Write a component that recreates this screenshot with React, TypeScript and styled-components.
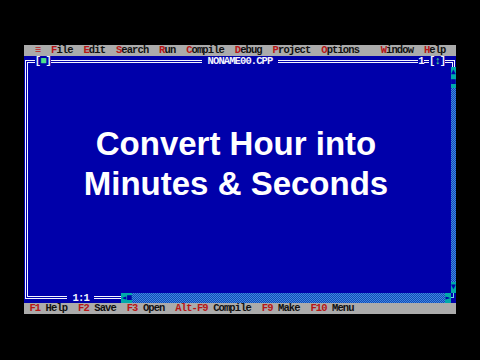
import React from "react";
import styled, { createGlobalStyle } from "styled-components";

const CW = 5.4;
const RH = 10.76;
const px = (n: number) => `${n.toFixed(2)}px`;

const Global = createGlobalStyle`
  html, body { margin: 0; padding: 0; background: #000; }
  body { width: 480px; height: 360px; overflow: hidden; }
`;

const Page = styled.div`
  width: 480px;
  height: 360px;
  box-sizing: border-box;
  padding: 45px 0 0 24px;
  background: #000;
`;

const Screen = styled.div`
  width: ${px(CW * 80)};
  height: ${px(RH * 25)};
  display: grid;
  grid-template-rows: ${px(RH)} 1fr ${px(RH)};
  font-family: "Liberation Mono", "DejaVu Sans Mono", monospace;
  font-size: 10.5px;
  font-weight: bold;
  letter-spacing: -0.9px;
  line-height: ${px(RH)};
  white-space: pre;
`;

const Bar = styled.div`
  display: block;
  background: #ababab;
  color: #101010;
  overflow: hidden;
`;

const Hot = styled.span`
  color: #b81616;
`;

const Window = styled.div`
  display: grid;
  grid-template-columns: ${px(CW)} 1fr ${px(CW)};
  grid-template-rows: ${px(RH)} 1fr ${px(RH)};
  background: #0000aa;
  color: #fff;
`;

const FRAME = "#f4f4ff";

const Corner = styled.div<{ $pos: "tl" | "tr" | "bl" }>`
  ${({ $pos }) =>
    $pos === "tl"
      ? `margin: 3.88px 0 0 1.2px; border-top: 3px double ${FRAME}; border-left: 3px double ${FRAME};`
      : $pos === "tr"
      ? `margin: 3.88px 1.2px 0 0; border-top: 3px double ${FRAME}; border-right: 3px double ${FRAME};`
      : `margin: 0 0 3.88px 1.2px; border-bottom: 3px double ${FRAME}; border-left: 3px double ${FRAME};`}
`;

const ResizeCorner = styled.div`
  margin: 0 2.2px 4.9px 0;
  border-right: 1px solid #5fe0e0;
  border-bottom: 1px solid #5fe0e0;
`;

const FrameRow = styled.div`
  display: flex;
  align-items: center;
  overflow: hidden;
`;

const HLine = styled.div<{ $cells: number }>`
  flex: none;
  width: ${({ $cells }) => px($cells * CW)};
  height: 3px;
  box-sizing: border-box;
  border-top: 1px solid ${FRAME};
  border-bottom: 1px solid ${FRAME};
`;

const Label = styled.span<{ $color?: string }>`
  color: ${({ $color }) => $color ?? FRAME};
`;

const Rail = styled.div`
  margin-left: 1.2px;
  border-left: 3px double ${FRAME};
`;

const Editor = styled.div`
  display: flex;
  flex-direction: column;
  align-items: center;
  padding: 57px 8px 0 0;
  overflow: hidden;
`;

const Headline = styled.div`
  font-family: "Liberation Sans", Arial, sans-serif;
  font-weight: bold;
  font-size: 33px;
  line-height: 40px;
  letter-spacing: 0;
  color: #ffffff;
  white-space: pre;
  text-align: center;
`;

const VScroll = styled.div`
  display: flex;
  flex-direction: column;
`;

const HScroll = styled.div`
  flex: 1;
  display: flex;
  align-self: stretch;
`;

const Cell = styled.div`
  flex: none;
  width: ${px(CW)};
  height: ${px(RH)};
  background: #00aaaa;
  color: #0000aa;
  font-family: "DejaVu Sans Mono", monospace;
  font-size: 8px;
  letter-spacing: 0;
  text-align: center;
  line-height: ${px(RH)};
  overflow: hidden;
`;

const Track = styled.div`
  flex: 1;
  background-color: #2a66cc;
  background-image: repeating-conic-gradient(#3c8ae0 0 25%, #1446b8 0 50%);
  background-size: 2px 2px;
`;

const menu: [string, string, string][] = [
  ["  ", "F", "ile"],
  ["  ", "E", "dit"],
  ["  ", "S", "earch"],
  ["  ", "R", "un"],
  ["  ", "C", "ompile"],
  ["  ", "D", "ebug"],
  ["  ", "P", "roject"],
  ["  ", "O", "ptions"],
  ["    ", "W", "indow"],
  ["  ", "H", "elp"],
];

const status: [string, string][] = [
  ["F1", " Help"],
  ["F2", " Save"],
  ["F3", " Open"],
  ["Alt-F9", " Compile"],
  ["F9", " Make"],
  ["F10", " Menu"],
];

export default function App() {
  return (
    <Page>
      <Global />
      <Screen>
        <Bar>
          {"  "}
          <Hot>≡</Hot>
          {menu.map(([gap, h, rest]) => (
            <React.Fragment key={h}>
              {gap}
              <Hot>{h}</Hot>
              {rest}
            </React.Fragment>
          ))}
        </Bar>
        <Window>
          <Corner $pos="tl" />
          <FrameRow>
            <HLine $cells={1} />
            <Label>[</Label>
            <Label $color="#4fe08a">■</Label>
            <Label>]</Label>
            <HLine $cells={28} />
            <Label> NONAME00.CPP </Label>
            <HLine $cells={26} />
            <Label>1</Label>
            <HLine $cells={1} />
            <Label>[</Label>
            <Label $color="#4fe08a">↕</Label>
            <Label>]</Label>
            <HLine $cells={1} />
          </FrameRow>
          <Corner $pos="tr" />

          <Rail />
          <Editor>
            <Headline>{"Convert Hour into\nMinutes & Seconds"}</Headline>
          </Editor>
          <VScroll>
            <Cell>▲</Cell>
            <Cell>■</Cell>
            <Track />
            <Cell>▼</Cell>
          </VScroll>

          <Corner $pos="bl" />
          <FrameRow>
            <HLine $cells={7} />
            <Label> 1:1 </Label>
            <HLine $cells={5} />
            <HScroll>
              <Cell>◄</Cell>
              <Cell>■</Cell>
              <Track />
              <Cell>►</Cell>
            </HScroll>
          </FrameRow>
          <ResizeCorner />
        </Window>
        <Bar>
          {" "}
          {status.map(([k, t], i) => (
            <React.Fragment key={k}>
              {i > 0 ? "  " : ""}
              <Hot>{k}</Hot>
              {t}
            </React.Fragment>
          ))}
        </Bar>
      </Screen>
    </Page>
  );
}
